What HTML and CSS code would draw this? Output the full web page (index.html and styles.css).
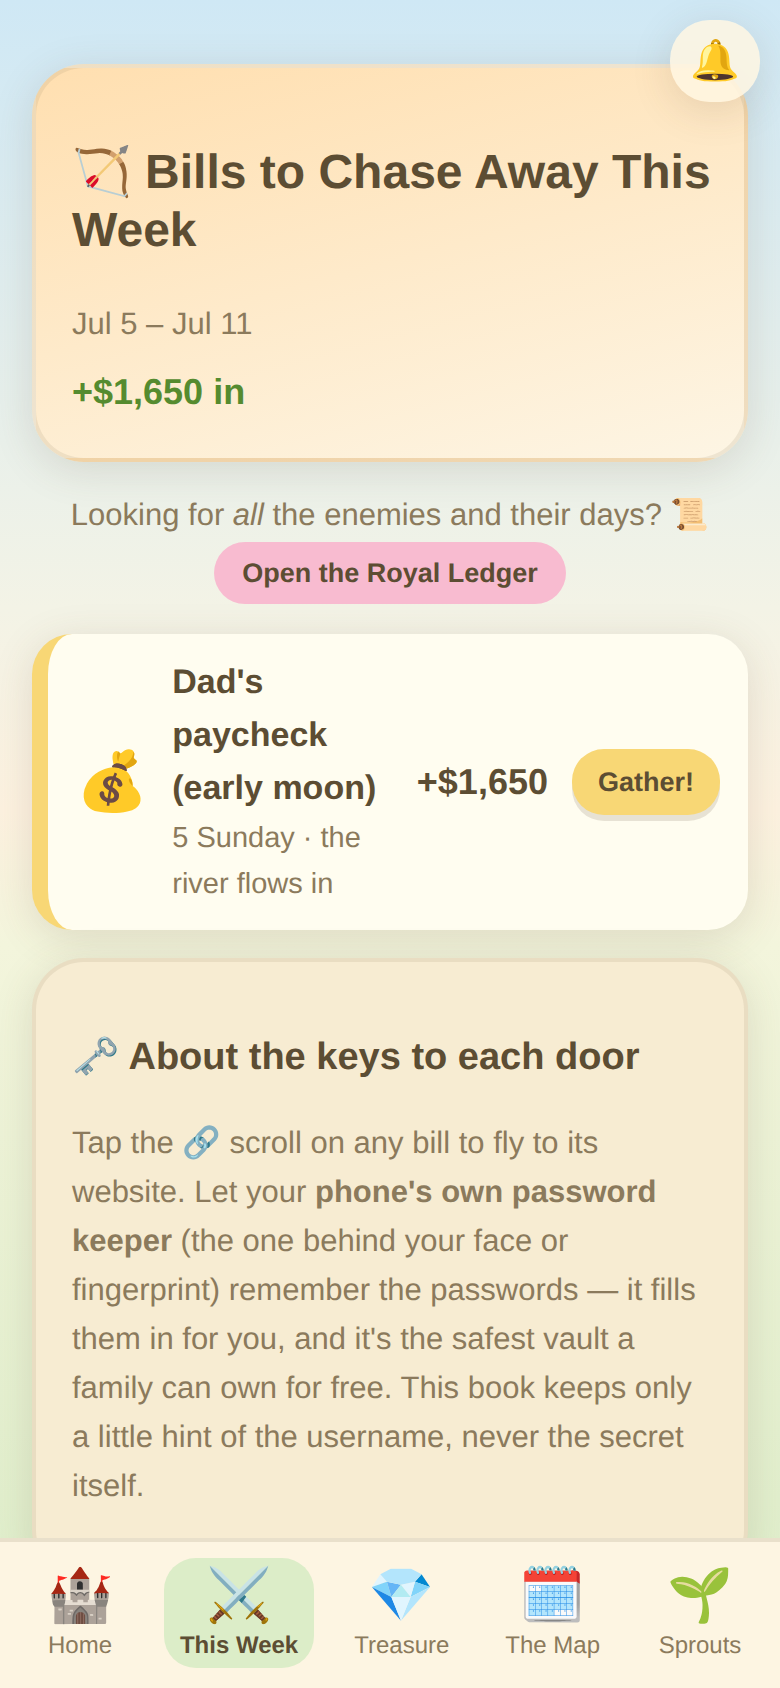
FILE: index.html
```html
<!DOCTYPE html>
<html lang="en">
<head>
<meta charset="utf-8">
<meta name="viewport" content="width=device-width, initial-scale=1">
<title>This Week</title>
<link rel="stylesheet" href="styles.css">
</head>
<body>
<button class="bell" type="button" aria-label="Reminders">🔔</button>
<main class="page">
  <section class="card hero">
    <h1 class="hero-title">🏹 Bills to Chase Away This Week</h1>
    <p class="muted">Jul 5 – Jul 11</p>
    <p class="income">+$1,650 in</p>
  </section>
  <div class="ledger">
    <p class="muted">Looking for <em>all</em> the enemies and their days? 📜</p>
    <button class="ledger-button" type="button">Open the Royal Ledger</button>
  </div>
  <article class="bill">
    <span class="bill-icon">💰</span>
    <div class="bill-text">
      <div class="bill-name">Dad's paycheck (early moon)</div>
      <div class="bill-note">5 Sunday · the river flows in</div>
    </div>
    <span class="amount">+$1,650</span>
    <button class="gather" type="button">Gather!</button>
  </article>
  <section class="card parchment">
    <h2 class="keys-title">🗝️ About the keys to each door</h2>
    <p class="muted">Tap the 🔗 scroll on any bill to fly to its website. Let your <strong>phone's own password keeper</strong> (the one behind your face or fingerprint) remember the passwords — it fills them in for you, and it's the safest vault a family can own for free. This book keeps only a little hint of the username, never the secret itself.</p>
  </section>
</main>
<nav class="tabs">
  <a class="tab" href="#home"><span class="tab-icon">🏰</span>Home</a>
  <a class="tab active" href="#week" aria-current="page"><span class="tab-icon">⚔️</span>This Week</a>
  <a class="tab" href="#treasure"><span class="tab-icon">💎</span>Treasure</a>
  <a class="tab" href="#map"><span class="tab-icon">🗓️</span>The Map</a>
  <a class="tab" href="#sprouts"><span class="tab-icon">🌱</span>Sprouts</a>
</nav>
</body>
</html>
```
FILE: styles.css
```css
* { box-sizing: border-box; }

html { scrollbar-width: none; }

body {
  margin: 0;
  min-height: 100vh;
  color: #5c4d33;
  font: 31px/49px "Liberation Sans", Arial, "Noto Color Emoji", sans-serif;
  text-rendering: geometricPrecision;
  background: linear-gradient(180deg, #cfe8f5 0%, #f3f3e6 36%, #fdf2e0 48%, #f3f5dc 56%, #dcedc8 100%) fixed;
}

button {
  border: 0;
  color: inherit;
  font: bold 27px/31px "Liberation Sans", Arial, "Noto Color Emoji", sans-serif;
  text-rendering: inherit;
  cursor: pointer;
}

.page { padding: 64px 32px 180px; }

.card {
  margin-bottom: 28px;
  padding: 36px;
  border: 4px solid rgba(139, 122, 92, 0.13);
  border-radius: 52px;
  box-shadow: 0 8px 40px rgba(92, 77, 51, 0.15);
}

.hero {
  padding: 36px 28px 38px 36px;
  background-image: linear-gradient(165deg, #ffdfb0, #fdf5e4);
}

.parchment { padding-bottom: 68px; background-color: #f7ecd2; }

.hero-title {
  margin: 40px 0 39px;
  font-size: 48px;
  line-height: 58px;
}

.keys-title {
  margin: 36px 0 38px;
  font-size: 38px;
  line-height: 46px;
}

.muted { margin: 0; color: #8b7a5c; }

.income {
  margin: 16px 0 0;
  color: #558b2f;
  font-size: 36px;
  font-weight: bold;
  line-height: 56px;
}

.ledger {
  display: flex;
  flex-direction: column;
  align-items: center;
  gap: 3px;
  margin-bottom: 30px;
  text-align: center;
}

.ledger-button {
  padding: 16px 28px 15px;
  border-radius: 32px;
  background: #f8bbd0;
}

.bill {
  display: flex;
  align-items: center;
  gap: 24px;
  margin-bottom: 28px;
  padding: 22px 28px 23px;
  border-left: 16px solid #f8d775;
  border-radius: 40px;
  background: #fffdf0;
  box-shadow: 0 8px 40px rgba(92, 77, 51, 0.15);
}

.bill-icon { font-size: 58px; line-height: 88px; }

.bill-text { flex: 1; min-width: 0; }

.bill-name { font-size: 34px; font-weight: bold; line-height: 53px; }

.bill-note { color: #8b7a5c; font-size: 29px; line-height: 46px; }

.amount { font-size: 36px; font-weight: bold; }

.gather {
  padding: 18px 26px 17px;
  border-radius: 32px;
  background: #f8d775;
  box-shadow: 0 6px 0 rgba(92, 77, 51, 0.15);
}

.bell {
  position: fixed;
  top: 20px;
  right: 20px;
  z-index: 2;
  padding: 18px 20px 17px;
  border-radius: 40px;
  background: rgba(255, 246, 226, 0.85);
  box-shadow: 0 8px 40px rgba(92, 77, 51, 0.15);
  font-size: 40px;
  line-height: 47px;
}

.tabs {
  position: fixed;
  right: 0;
  bottom: 0;
  left: 0;
  display: flex;
  justify-content: space-around;
  padding: 16px 8px 20px;
  border-top: 4px solid #e9e0cb;
  background: #fdf5e2;
}

.tab {
  display: flex;
  flex-direction: column;
  align-items: center;
  min-width: 120px;
  padding: 7px 16px 3px;
  border-radius: 32px;
  color: #8b7a5c;
  font-size: 24px;
  line-height: 38px;
  text-decoration: none;
}

.active { background: #dcedc8; color: #5c4d33; font-weight: bold; }

.tab-icon { font-size: 53px; font-weight: normal; line-height: 62px; }
```
